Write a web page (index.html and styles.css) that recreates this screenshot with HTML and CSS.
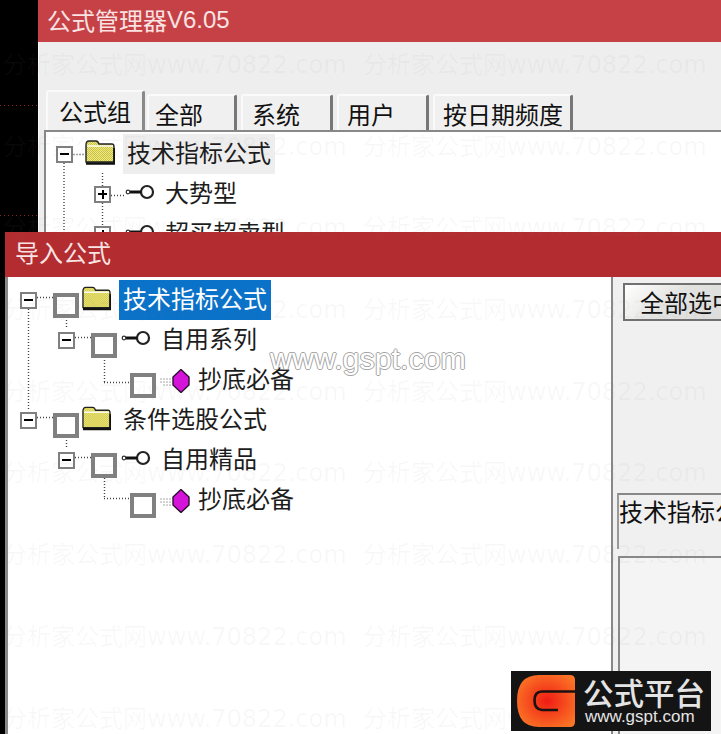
FILE: index.html
```html
<!DOCTYPE html>
<html lang="zh-CN">
<head>
<meta charset="utf-8">
<title>公式管理器</title>
<link rel="stylesheet" href="styles.css">
</head>
<body>
<svg class="defs" width="0" height="0" aria-hidden="true">
  <defs>
    <pattern id="dither" width="2" height="2" patternUnits="userSpaceOnUse">
      <rect width="2" height="2" fill="#f2ec7c"/>
      <rect width="1" height="1" fill="#c9c24a"/>
      <rect x="1" y="1" width="1" height="1" fill="#c9c24a"/>
    </pattern>
    <symbol id="folder" viewBox="0 0 30 26">
      <path d="M1 23V6Q1 2 4 2H11Q13 2 14 5H27Q29 5 29 8V23Z" fill="url(#dither)" stroke="#222" stroke-width="1.4"/>
      <path d="M2 7H28" stroke="#fff" stroke-width="1.4"/>
      <path d="M1 24.500H29.500V9" fill="none" stroke="#111" stroke-width="2.400"/>
    </symbol>
    <symbol id="key" viewBox="0 0 30 16">
      <circle cx="22" cy="8" r="6" fill="#fff" stroke="#222" stroke-width="2.2"/>
      <path d="M5 8H16" stroke="#111" stroke-width="3"/>
      <circle cx="3" cy="8" r="1.8" fill="#fff" stroke="#333" stroke-width="1.2"/>
    </symbol>
    <symbol id="gem" viewBox="0 0 30 24">
      <path d="M0 10H12M0 13H12M3 16H12" stroke="#a8a8a8" stroke-width="1" stroke-dasharray="2 1"/>
      <path d="M21 0.500L29 8V16L21 23.500L13 16V8Z" fill="#d414d8" stroke="#2a1030" stroke-width="1.4"/>
    </symbol>
  </defs>
</svg>

<main class="desktop">
  <div class="chart-dots chart-dots-a"></div>
  <div class="chart-dots chart-dots-b"></div>

  <section class="win win-back">
    <header class="titlebar titlebar-back">公式管理器<span class="latin">V6.05</span></header>
    <div class="win-body">
      <nav class="tabs">
        <span class="tab tab-active">公式组</span>
        <span class="tab tab-all">全部</span>
        <span class="tab tab-sys">系统</span>
        <span class="tab tab-user">用户</span>
        <span class="tab tab-date">按日期频度</span>
      </nav>
      <div class="tree tree-back">
        <svg class="links" width="677" height="120" viewBox="46 132 677 120">
          <path d="M64 163V232M73.500 154.500H85M102.500 173V187M111 195.500H126M102.500 203V227M111 235.500H126"/>
        </svg>
        <div class="row back-l0">
          <span class="exp exp-back0 minus"></span>
          <svg class="ico-folder-back"><use href="#folder"/></svg>
          <span class="label label-soft">技术指标公式</span>
        </div>
        <div class="row back-l1">
          <span class="exp exp-back1 plus"></span>
          <svg class="ico-key"><use href="#key"/></svg>
          <span class="label">大势型</span>
        </div>
        <div class="row back-l1">
          <span class="exp exp-back1 plus"></span>
          <svg class="ico-key"><use href="#key"/></svg>
          <span class="label">超买超卖型</span>
        </div>
      </div>
    </div>
  </section>

  <section class="win win-front">
    <header class="titlebar titlebar-front">导入公式</header>
    <div class="panes">
      <div class="tree tree-front">
        <svg class="links" width="604" height="300" viewBox="8 280 604 300">
          <path d="M28.500 309V412M37 300.500H53M66.500 317V332M75 340.500H91M104.500 357V385M104 385.500H130M37 420.500H53M66.500 437V452M75 460.500H91M104.500 478V501M104 501.500H130"/>
        </svg>
        <div class="row front-l0">
          <span class="exp minus"></span><span class="check check-l0"></span>
          <svg class="ico-folder"><use href="#folder"/></svg>
          <span class="label label-selected">技术指标公式</span>
        </div>
        <div class="row front-l1">
          <span class="exp minus"></span><span class="check check-l1"></span>
          <svg class="ico-key ico-key-front"><use href="#key"/></svg>
          <span class="label">自用系列</span>
        </div>
        <div class="row front-l2">
          <span class="check"></span>
          <svg class="ico-gem"><use href="#gem"/></svg>
          <span class="label">抄底必备</span>
        </div>
        <div class="row front-l0">
          <span class="exp minus"></span><span class="check check-l0"></span>
          <svg class="ico-folder"><use href="#folder"/></svg>
          <span class="label">条件选股公式</span>
        </div>
        <div class="row front-l1">
          <span class="exp minus"></span><span class="check check-l1"></span>
          <svg class="ico-key ico-key-front"><use href="#key"/></svg>
          <span class="label">自用精品</span>
        </div>
        <div class="row front-l2">
          <span class="check"></span>
          <svg class="ico-gem"><use href="#gem"/></svg>
          <span class="label">抄底必备</span>
        </div>
      </div>
      <aside class="side">
        <button class="select-all" type="button">全部选中</button>
        <div class="field">技术指标公式</div>
        <div class="memo"></div>
      </aside>
    </div>
  </section>

  <div class="watermark" aria-hidden="true">
    <span>分析家公式网www.70822.com</span><span>分析家公式网www.70822.com</span>
    <span>分析家公式网www.70822.com</span><span>分析家公式网www.70822.com</span>
    <span>分析家公式网www.70822.com</span><span>分析家公式网www.70822.com</span>
    <span>分析家公式网www.70822.com</span><span>分析家公式网www.70822.com</span>
    <span>分析家公式网www.70822.com</span><span>分析家公式网www.70822.com</span>
    <span>分析家公式网www.70822.com</span><span>分析家公式网www.70822.com</span>
    <span>分析家公式网www.70822.com</span><span>分析家公式网www.70822.com</span>
    <span>分析家公式网www.70822.com</span><span>分析家公式网www.70822.com</span>
    <span>分析家公式网www.70822.com</span><span>分析家公式网www.70822.com</span>
  </div>

  <div class="stamp">www.gspt.com</div>

  <div class="logo">
    <svg class="logo-mark" width="58" height="52" viewBox="0 0 58 52">
      <defs>
        <radialGradient id="flame" cx="52%" cy="50%" r="60%">
          <stop offset="0" stop-color="#f01c14"/>
          <stop offset="1" stop-color="#fb7526"/>
        </radialGradient>
      </defs>
      <path d="M22 0H53Q58 0 58 5V47Q58 52 53 52H22Q0 52 0 26T22 0Z" fill="url(#flame)"/>
      <path d="M58 16.500H25Q17.500 16.500 17.500 25.500T25 35H41" fill="none" stroke="#1a1210" stroke-width="2.600"/>
    </svg>
    <div class="logo-text">
      <span class="logo-name">公式平台</span>
      <span class="logo-url">www.gspt.com</span>
    </div>
  </div>
  <div class="logo-under">www.gspt.com 公式平台</div>
</main>
</body>
</html>
```

FILE: styles.css
```css
* {
  box-sizing: border-box;
}

html,
body {
  margin: 0;
  height: 100%;
  background: #000;
  overflow: hidden;
}

body {
  font-family: "Noto Sans CJK SC", "Liberation Sans", sans-serif;
  font-size: 24px;
  color: #111;
}

.defs {
  position: absolute;
}

.desktop {
  position: relative;
  width: 721px;
  height: 734px;
  overflow: hidden;
}

.chart-dots {
  position: absolute;
  left: 0;
  width: 37px;
  height: 1px;
  background: repeating-linear-gradient(90deg, #8a2020 0 1px, transparent 1px 4px);
}

.chart-dots-a {
  top: 105px;
}

.chart-dots-b {
  top: 215px;
}

.win {
  position: absolute;
  right: 0;
  overflow: hidden;
}

.win-back {
  left: 38px;
  top: 0;
  height: 240px;
  background: #eeeeee;
}

.win-front {
  left: 5px;
  top: 232px;
  bottom: 0;
  display: flex;
  flex-direction: column;
  background: #f0f0f0;
}

.titlebar {
  color: #f9e3e3;
  line-height: 1;
  display: flex;
  align-items: center;
  flex: none;
}

.titlebar-back {
  height: 42px;
  padding: 0 0 2px 9px;
  background: #c64146;
}

.titlebar-front {
  height: 45px;
  padding: 0 0 5px 10px;
  background: #b22c30;
}

.latin {
  font-family: "Liberation Sans", sans-serif;
}

.win-body {
  padding-top: 48px;
  border-left: 1px solid #fafafa;
}

.tabs {
  display: flex;
  align-items: flex-end;
  gap: 4px;
  height: 40px;
  padding-left: 7px;
}

.tab {
  height: 36px;
  line-height: 36px;
  background: #f0f0f0;
  border-top: 2px solid #fafafa;
  border-left: 2px solid #fafafa;
  border-right: 3px solid #777;
  border-radius: 3px 3px 0 0;
  white-space: nowrap;
}

.tab-active {
  width: 99px;
  height: 40px;
  margin-right: -2px;
  padding: 0 0 0 11px;
  line-height: 38px;
  border-right-color: #8a8a8a;
}

.tab-all {
  width: 90px;
  padding-left: 6px;
}

.tab-sys {
  width: 92px;
  padding-left: 9px;
}

.tab-user {
  width: 92px;
  padding-left: 8px;
}

.tab-date {
  width: 140px;
  padding-left: 8px;
}

.tree {
  position: relative;
  background: #fff;
  white-space: nowrap;
}

.tree-back {
  margin-left: 5px;
  padding-top: 2px;
  border-top: 2px solid #888;
  border-left: 2px solid #888;
}

.links {
  position: absolute;
  left: 0;
  top: 0;
  fill: none;
  stroke: #444;
  stroke-width: 1.4;
  stroke-dasharray: 1 2;
}

.row {
  position: relative;
  display: flex;
  align-items: center;
  height: 40px;
}

.exp {
  position: relative;
  flex: none;
  width: 17px;
  height: 17px;
  margin-right: 16px;
  background: #fff;
  border: 2px solid #7f7f7f;
}

.minus::before,
.plus::before,
.plus::after {
  content: "";
  position: absolute;
  background: #000;
}

.minus::before,
.plus::before {
  left: 2px;
  right: 2px;
  top: 5.5px;
  height: 2px;
}

.plus::after {
  top: 2px;
  bottom: 2px;
  left: 5.5px;
  width: 2px;
}

.check {
  flex: none;
  width: 26px;
  height: 25px;
  margin-top: 10px;
  background: #fff;
  border: 4px solid #808080;
}

.label {
  flex: none;
  height: 40px;
  padding: 0 4px;
  line-height: 35px;
  color: #1c1c1c;
}

.label-soft {
  background: #eeeeee;
}

.label-selected {
  background: #0a72c9;
  color: #fff;
}

/* back tree indentation */
.back-l0 {
  padding-left: 10px;
}

.back-l1 {
  padding-left: 48px;
}

.exp-back0 {
  margin-right: 12px;
}

.exp-back1 {
  margin-right: 14px;
}

.ico-folder-back {
  flex: none;
  width: 30px;
  height: 26px;
  margin: 0 8px 0 0;
  position: relative;
  top: -2px;
}

.ico-key {
  flex: none;
  width: 30px;
  height: 16px;
  margin-right: 6px;
  position: relative;
  top: -2px;
}

/* front tree */
.panes {
  display: flex;
  flex: 1;
  min-height: 0;
}

.tree-front {
  flex: none;
  width: 608px;
  padding-top: 3px;
  border-left: 3px solid #888;
  border-right: 2px solid #888;
}

.front-l0 {
  padding-left: 12px;
}

.front-l1 {
  padding-left: 50px;
}

.front-l2 {
  padding-left: 122px;
}

.check-l0,
.check-l1 {
  margin-right: 3px;
}

.ico-folder {
  flex: none;
  width: 29px;
  height: 26px;
  margin: 0 8px 5px 0;
}

.ico-key-front {
  margin-left: 1px;
  margin-right: 6px;
  top: -2px;
}

.ico-gem {
  flex: none;
  width: 30px;
  height: 24px;
  margin: 2px 4px 0 4px;
}

.side {
  flex: 1;
  min-width: 0;
  padding-top: 6px;
  overflow: hidden;
  background: #f0f0f0;
  white-space: nowrap;
}

.select-all {
  display: block;
  width: 130px;
  height: 38px;
  margin-left: 10px;
  padding: 0 0 0 15px;
  font: inherit;
  line-height: 32px;
  text-align: left;
  color: #111;
  background: linear-gradient(135deg, #fff, #e2e2e0 40%, #dadad8);
  border: 2px solid #707070;
}

.field {
  width: 140px;
  height: 56px;
  margin: 172px 0 0 4px;
  line-height: 32px;
  border-top: 2px solid #888;
  border-left: 2px solid #999;
}

.memo {
  width: 140px;
  height: 200px;
  margin: 7px 0 0 5px;
  background: #f4f4f4;
  border: 2px solid #888;
}

.watermark {
  position: absolute;
  inset: 0;
  display: grid;
  grid-template-columns: 360px 360px;
  grid-auto-rows: 81.7px;
  padding: 48px 0 0 3px;
  line-height: 34px;
  color: rgba(128, 128, 128, 0.06);
  white-space: nowrap;
  pointer-events: none;
}

.watermark span {
  font-family: "DejaVu Sans", "Noto Sans CJK SC", sans-serif;
}

.stamp {
  position: absolute;
  left: 270px;
  top: 341px;
  font-family: "Liberation Sans", sans-serif;
  font-size: 30.4px;
  line-height: 34px;
  color: #fff;
  text-shadow:
    1px 0 #a4a4a4,
    -1px 0 #a4a4a4,
    0 1px #a4a4a4,
    0 -1px #a4a4a4;
}

.logo {
  position: absolute;
  left: 511px;
  top: 671px;
  display: flex;
  gap: 8px;
  width: 200px;
  height: 60px;
  padding: 4px 0 0 6px;
  background: #141414;
}

.logo-mark {
  flex: none;
}

.logo-text {
  display: flex;
  flex-direction: column;
  color: #e4e4e4;
}

.logo-name {
  font-size: 30.5px;
  font-weight: 500;
  line-height: 34px;
  white-space: nowrap;
}

.logo-url {
  padding-left: 2px;
  font-family: "Liberation Sans", sans-serif;
  font-size: 17px;
  line-height: 15px;
}

.logo-under {
  position: absolute;
  left: 600px;
  top: 731px;
  height: 3px;
  overflow: hidden;
  font-family: "Liberation Sans", "Noto Sans CJK SC", sans-serif;
  font-size: 14px;
  font-weight: 700;
  line-height: 18px;
  color: #c8242c;
  white-space: nowrap;
}
```
